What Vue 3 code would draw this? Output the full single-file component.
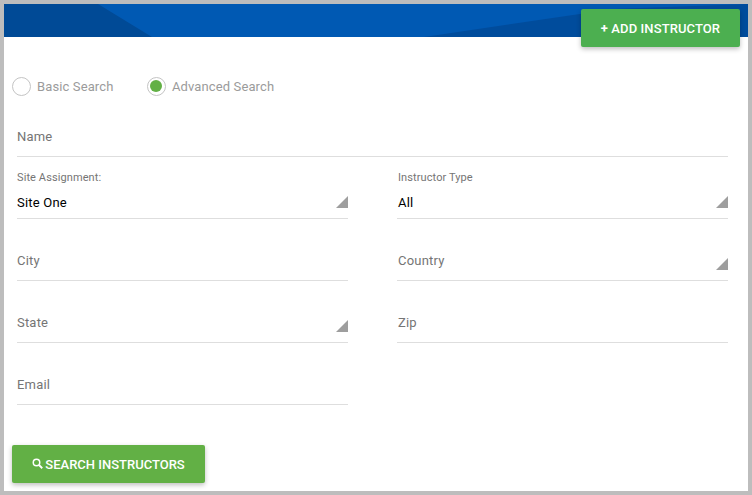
<script setup>
const rows = [
  [{ label: 'City' }, { label: 'Country', select: true }],
  [{ label: 'State', select: true }, { label: 'Zip' }],
  [{ label: 'Email' }, null],
]
</script>

<template>
  <div class="frame">
    <header class="banner">
      <svg class="art" width="744" height="33" viewBox="0 0 744 33" preserveAspectRatio="none" aria-hidden="true">
        <polygon points="0,0 94,0 148,33 0,33" fill="#004a96" />
        <polygon points="420,33 610,5 744,0 744,33" fill="#004c9c" />
      </svg>
      <button class="btn add"><span class="plus">+</span> ADD INSTRUCTOR</button>
    </header>

    <div class="radios">
      <label class="radio"><span class="dot"></span>Basic Search</label>
      <label class="radio"><span class="dot on"></span>Advanced Search</label>
    </div>

    <form class="form" @submit.prevent>
      <div class="field wide"><span class="placeholder">Name</span></div>
      <div class="grid">
        <div class="field labelled">
          <span class="small">Site Assignment:</span>
          <span class="value">Site One</span>
          <i class="tri"></i>
        </div>
        <div class="field labelled">
          <span class="small">Instructor Type</span>
          <span class="value">All</span>
          <i class="tri"></i>
        </div>
        <template v-for="(row, r) in rows" :key="r">
          <template v-for="(f, c) in row" :key="c">
            <div v-if="f" class="field">
              <span class="placeholder">{{ f.label }}</span>
              <i v-if="f.select" class="tri"></i>
            </div>
          </template>
        </template>
      </div>
    </form>

    <button class="btn search">
      <svg width="12" height="12" viewBox="0 0 24 24" aria-hidden="true">
        <path fill="none" stroke="#fff" stroke-width="3" d="M9 2.5a6.5 6.5 0 1 0 0 13a6.5 6.5 0 1 0 0-13z" />
        <path fill="none" stroke="#fff" stroke-width="3.6" d="M13.5 13.5L20.5 20.5" />
      </svg>
      SEARCH INSTRUCTORS
    </button>
  </div>
</template>

<style>
html, body { margin: 0; background: #bdbdbd; }
</style>

<style scoped>
.frame {
  box-sizing: border-box;
  width: 752px;
  height: 495px;
  border: 4px solid #bdbdbd;
  background: #fff;
  font-family: Roboto, "Liberation Sans", sans-serif;
  overflow: hidden;
}
.banner {
  position: relative;
  height: 33px;
  background: #0059b3;
}
.art { display: block; }
.btn {
  border: 0;
  border-radius: 2px;
  color: #fff;
  font-family: inherit;
  font-size: 13px;
  font-weight: 500;
  height: 38px;
  padding: 0;
  box-shadow: 0 2px 5px rgba(0, 0, 0, 0.26);
}
.add {
  position: absolute;
  left: 577px;
  top: 5px;
  width: 159px;
  background: #4caf50;
  letter-spacing: 0.1px;
}
.plus { font-weight: 700; }
.radios {
  display: flex;
  gap: 33.5px;
  padding: 39px 0 0 8px;
}
.radio {
  display: flex;
  align-items: center;
  gap: 6px;
  height: 20px;
  font-size: 13px;
  letter-spacing: 0.12px;
  color: #9b9b9b;
}
.dot {
  box-sizing: border-box;
  position: relative;
  width: 19px;
  height: 19px;
  border: 1px solid #c4c4c4;
  border-radius: 50%;
}
.dot.on::after {
  content: "";
  position: absolute;
  inset: 2.5px;
  border-radius: 50%;
  background: #62b045;
}
.form { padding: 0 20px 0 13px; }
.grid {
  display: grid;
  grid-template-columns: 331px 331px;
  column-gap: 49px;
}
.field {
  box-sizing: border-box;
  position: relative;
  height: 62px;
  border-bottom: 1px solid #dedede;
  display: flex;
  flex-direction: column;
  justify-content: flex-end;
  padding-bottom: 11px;
}
.field.wide { height: 61px; }
.grid > .field:nth-child(even) { padding-left: 1px; }
.placeholder {
  font-size: 13px;
  line-height: 16px;
  color: #757575;
  letter-spacing: 0.2px;
}
.labelled { padding-bottom: 7px; }
.small {
  font-size: 11px;
  line-height: 14px;
  color: #757575;
  margin-bottom: 10px;
  letter-spacing: 0.1px;
}
.value {
  font-size: 13px;
  line-height: 16px;
  color: #000;
  letter-spacing: 0.2px;
}
.tri {
  position: absolute;
  right: 0;
  bottom: 10px;
  width: 0;
  height: 0;
  border-style: solid;
  border-width: 0 0 12px 12px;
  border-color: transparent transparent #9e9e9e transparent;
}
.search {
  position: relative;
  display: flex;
  align-items: center;
  justify-content: center;
  gap: 1px;
  margin: 40px 0 0 8px;
  width: 193px;
  background: #62b045;
}
</style>
